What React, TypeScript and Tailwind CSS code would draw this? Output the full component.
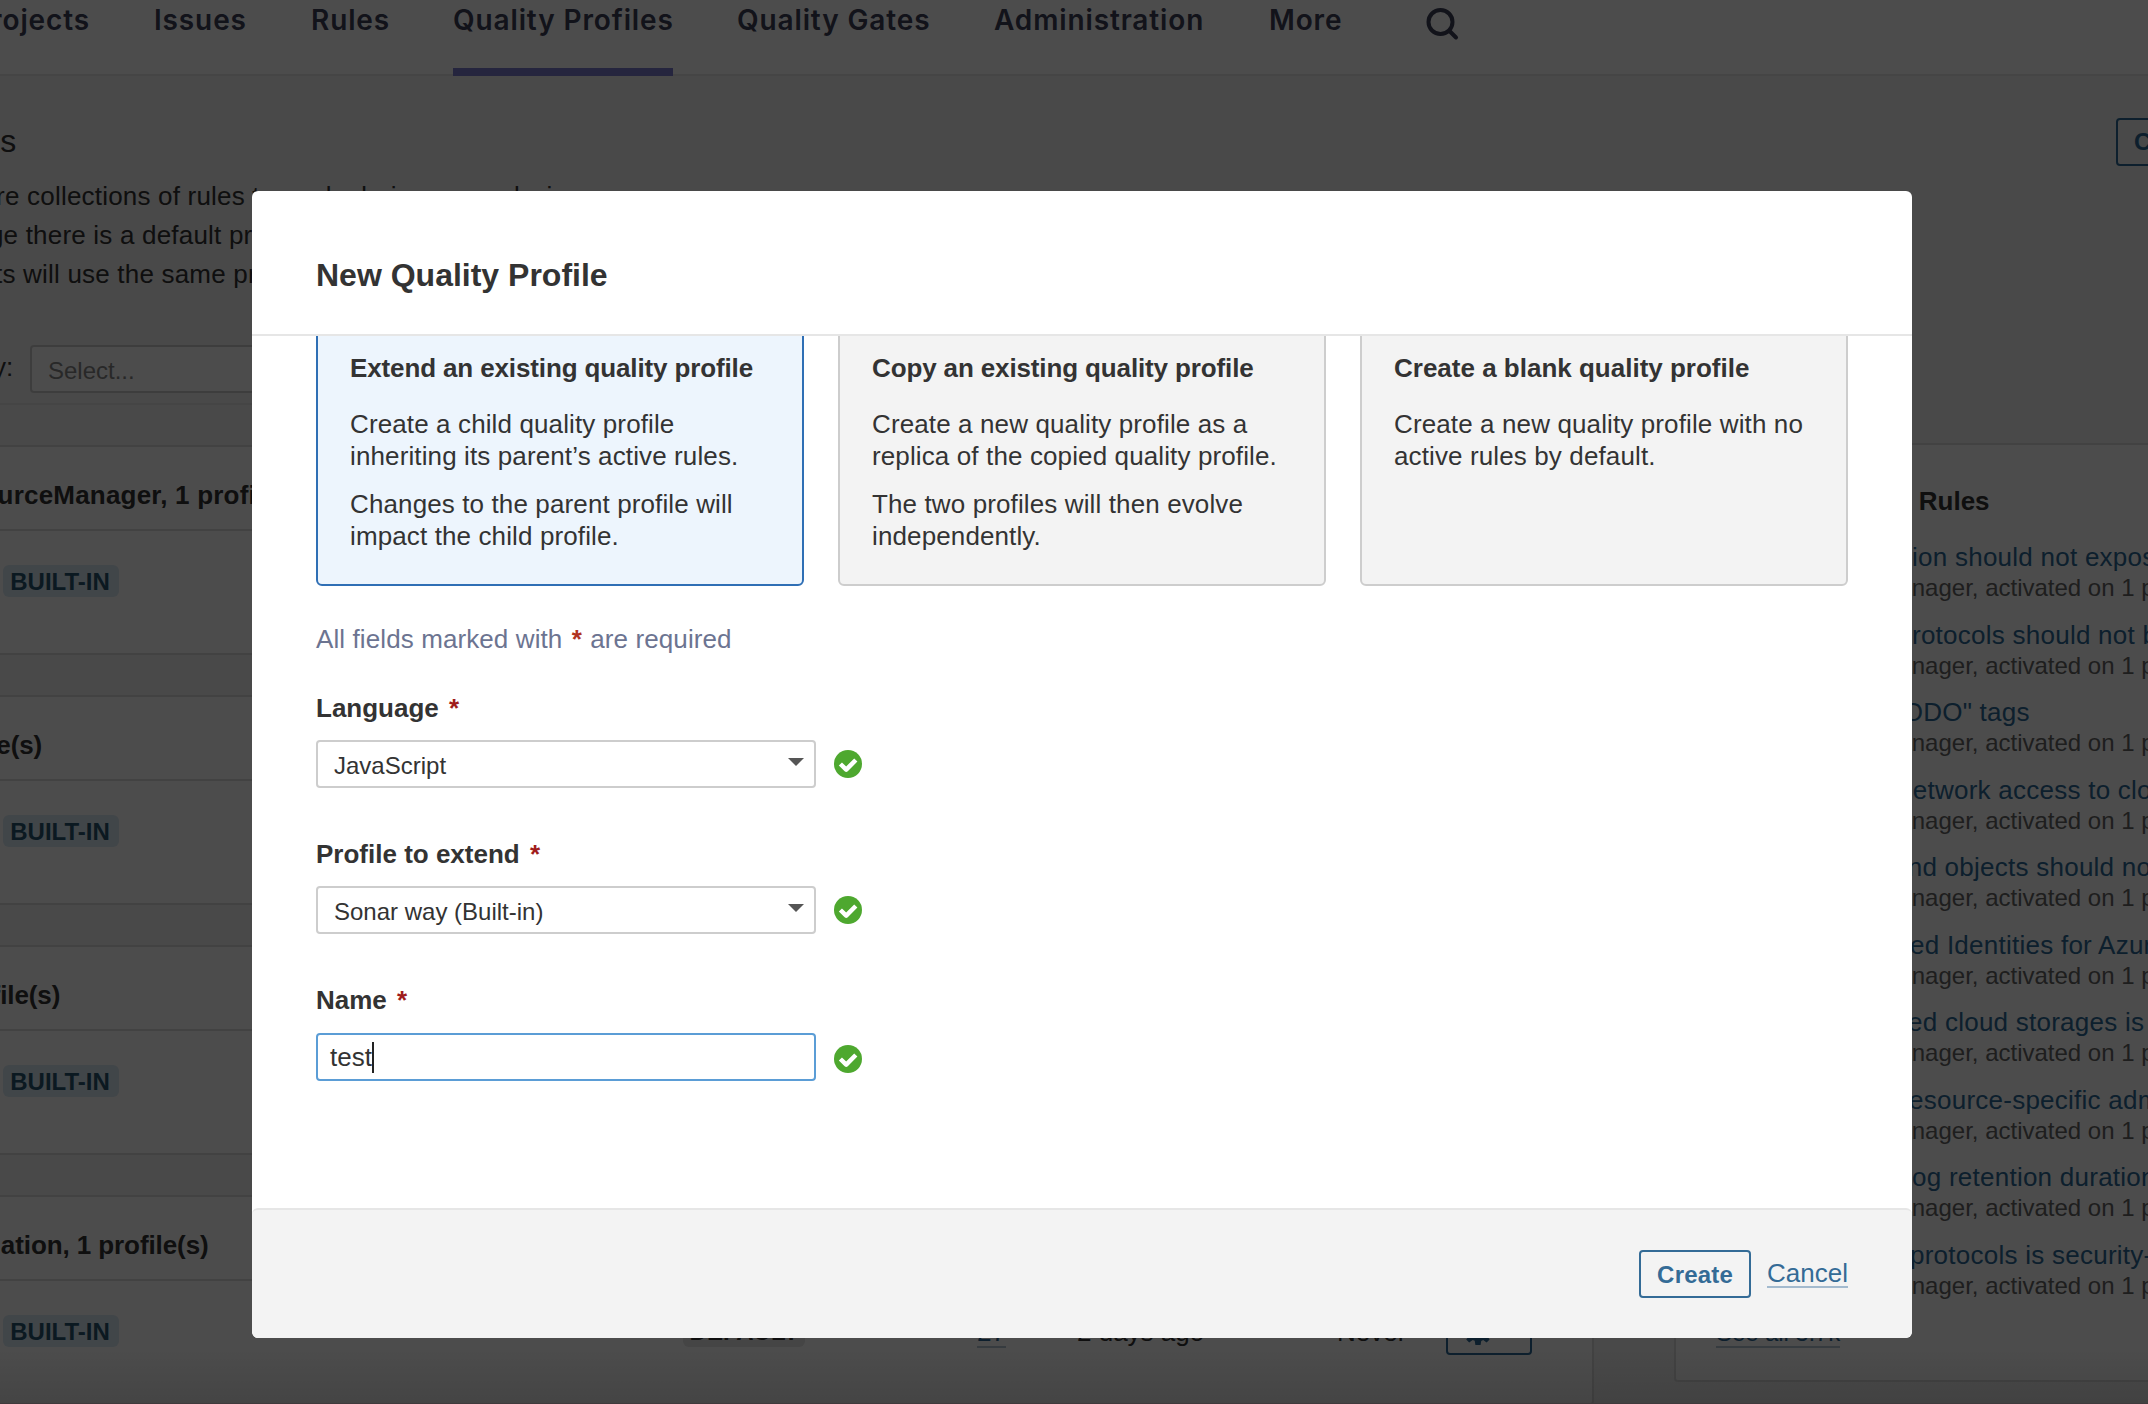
import React from "react";

const navItems = [
  { label: "Projects", box: "w-[90px] justify-end" },
  { label: "Issues", box: "w-[93px]" },
  { label: "Rules", box: "w-[78px]" },
  { label: "Quality Profiles", box: "w-[220px]", active: true },
  { label: "Quality Gates", box: "w-[193px]" },
  { label: "Administration", box: "w-[211px]" },
  { label: "More", box: "w-[74px]" },
];

const languages = [
  { name: "AzureResourceManager", text: "-ml-[140px] tracking-[0.2px]" },
  { name: "C#", text: "-ml-[137px] tracking-[-0.09px]" },
  { name: "CSS", text: "-ml-[139px] tracking-[-0.09px]" },
  { name: "CloudFormation", text: "-ml-[137px] tracking-[-0.09px]" },
];

const rules = [
  { text: "ion should not expose sensitive data", offset: "pl-[196px]" },
  { text: "rotocols should not be used", offset: "pl-[196px]" },
  { text: "TODO\" tags", offset: "pl-[171px]" },
  { text: "network access to cloud resources", offset: "pl-[182px]" },
  { text: "and objects should not be shared", offset: "pl-[177px]" },
  { text: "ed Identities for Azure resources", offset: "pl-[194px]" },
  { text: "ed cloud storages is sensitive", offset: "pl-[192px]" },
  { text: "esource-specific admin accounts", offset: "pl-[193px]" },
  { text: "og retention duration is short", offset: "pl-[196px]" },
  { text: "protocols is security-sensitive", offset: "pl-[194px]" },
];

function TopNav() {
  return (
    <header className="flex h-[76px] border-b-2 border-[#e6e6e6] bg-white font-['Inter',sans-serif] text-[28px] leading-8 font-semibold tracking-[0.87px] text-[#3d4059]">
      <nav className="flex gap-16">
        {navItems.map((item) => (
          <div
            key={item.label}
            className={`flex h-[76px] shrink-0 border-b-8 pt-1 whitespace-nowrap ${item.box} ${item.active ? "border-[#7e7ecf]" : "border-transparent"}`}
          >
            {item.label}
          </div>
        ))}
      </nav>
      <svg className="mt-[7px] ml-[82px] size-9" viewBox="0 0 36 36" fill="none" stroke="currentColor" strokeWidth="4" strokeLinecap="round">
        <circle cx="15.5" cy="15" r="12" />
        <path d="M24.5 24l6.5 6.5" />
      </svg>
    </header>
  );
}

function Badge({ children, className }: { children: React.ReactNode; className: string }) {
  return (
    <span className={`flex h-8 items-center justify-center rounded-md pt-px text-2xl leading-8 font-bold ${className}`}>
      {children}
    </span>
  );
}

function LanguagePanel({ name, text }: { name: string; text: string }) {
  return (
    <section className="h-[210px] rounded-br-sm border-y-2 border-r-2 border-[#dedede] bg-white">
      <div className="h-[84px] border-b-2 border-[#dedede] pt-8">
        <h2 className={`text-[26px] leading-8 font-bold whitespace-nowrap ${text}`}>{name}, 1 profile(s)</h2>
      </div>
      <div className="flex h-[122px] pt-[34px] text-[26px] leading-8">
        <Badge className="ml-[3px] w-[116px] bg-[#dbe9f4] pr-0.5 text-[#27546e]">BUILT-IN</Badge>
        <Badge className="ml-[564px] w-[122px] bg-[#e6e6e6]">DEFAULT</Badge>
        <span className="ml-[172px] h-[33px] w-[29px] border-b-2 border-[#b4c6d4] pt-px text-[#2c6a97]">27</span>
        <span className="ml-[71px] w-[130px] pt-px">2 days ago</span>
        <span className="ml-[130px] w-[70px] pt-px">Never</span>
        <span className="-mt-2 ml-[39px] flex h-12 w-[86px] items-center justify-center gap-2 rounded border-2 border-[#2c6a97] text-[#2c6a97]">
          <svg className="size-7" viewBox="0 0 28 28" fill="currentColor">
            <path
              fillRule="evenodd"
              d="M11.4 0h5.2l.7 4.2 2 .9L22.800 2.600l3 3-2.500 3.400.9 2.100L28 11.500v5l-4 .6-.9 2 2.500 3.500-3 3-3.400-2.500-2 .9-.6 4h-5.200l-.7-4.200-2-.8-3.500 2.500-3-3L4.900 19 4 17.100l-4-.6v-5l4-.6.9-2L2.400 5.500l3-3L8.800 5l2-.9zM14 9.500a4.500 4.500 0 100 9 4.500 4.500 0 000-9z"
            />
          </svg>
          <svg className="h-2 w-3.5" viewBox="0 0 14 8" fill="currentColor">
            <path d="M0 0h14L7 8z" />
          </svg>
        </span>
      </div>
    </section>
  );
}

function RecentRules() {
  return (
    <aside className="-mt-0.5 ml-20 h-[939px] w-[560px] shrink-0 rounded-sm border-2 border-[#dedede] bg-white pt-10 pl-10">
      <h2 className="text-[26px] leading-8 font-bold">Recently Added Rules</h2>
      <ul className="mt-6">
        {rules.map((rule) => (
          <li key={rule.text} className="h-[77.5px] whitespace-nowrap">
            <div className={`text-[26px] leading-8 tracking-[0.25px] text-[#2c6a97] ${rule.offset}`}>{rule.text}</div>
            <div className="-ml-[3px] text-2xl leading-[29px] text-[#666]">AzureResourceManager, activated on 1 profile(s)</div>
          </li>
        ))}
      </ul>
      <a className="-mt-px block h-[33px] w-fit border-b-2 border-[#b4c6d4] pt-0.5 text-2xl leading-8 tracking-[-0.1px] text-[#2c6a97]">See all 3.7k</a>
    </aside>
  );
}

function ProfilesPage() {
  return (
    <div className="h-[1404px] overflow-hidden bg-[#f3f3f3]">
      <TopNav />
      <div className="h-[329px] w-[1594px] border-b-2 border-[#e6e6e6]">
        <div className="flex w-[2260px] items-start justify-between pt-[42px]">
          <div className="w-[1200px] whitespace-nowrap">
            <h1 className="-ml-[199px] pt-[3px] text-[32px] leading-10">Quality Profiles</h1>
            <div className="mt-4 text-[26px] leading-[39px] tracking-[0.2px]">
              <p className="-ml-[204px]">Quality Profiles are collections of rules to apply during an analysis.</p>
              <p className="-ml-[202px]">For each language there is a default profile. All projects</p>
              <p className="-ml-[5px]">ts will use the same profile by default.</p>
            </div>
          </div>
          <button className="h-12 w-36 shrink-0 rounded border-2 border-[#2c6a97] pl-4 text-left text-2xl font-bold text-[#2c6a97]">
            Create
          </button>
        </div>
        <div className="mt-[51px] flex h-12 text-[26px]">
          <span className="-ml-[7px] w-[37px] pt-1.5 leading-8">y:</span>
          <div className="w-[400px] rounded border-2 border-[#cdcdcd] bg-white pt-0.5 pl-4 text-2xl leading-[44px] text-[#888]">Select...</div>
        </div>
      </div>
      <div className="mt-10 flex items-start">
        <main className="flex w-[1594px] shrink-0 flex-col gap-10">
          {languages.map((language) => (
            <LanguagePanel key={language.name} {...language} />
          ))}
        </main>
        <RecentRules />
      </div>
    </div>
  );
}

function CheckMark({ className = "" }: { className?: string }) {
  return (
    <svg className={`size-7 shrink-0 ${className}`} viewBox="0 0 28 28">
      <circle cx="14" cy="14" r="14" fill="#4ea82f" />
      <path d="M6.4 14l5.8 5.6 9.6-9.600" fill="none" stroke="#fff" strokeWidth="4.500" strokeLinejoin="round" />
    </svg>
  );
}

function FieldLabel({ children }: { children: React.ReactNode }) {
  return (
    <label className="block text-[26px] leading-8 font-bold">
      {children} <span className="ml-[3px] text-[#a01c1c]">*</span>
    </label>
  );
}

function SelectField({ label, value }: { label: string; value: string }) {
  return (
    <div className="h-[146px]">
      <FieldLabel>{label}</FieldLabel>
      <div className="mt-4 flex items-center">
        <div className="flex h-12 w-[500px] justify-between rounded border-2 border-[#cdcdcd] bg-white pr-2.5 pl-4">
          <span className="pt-0.5 text-2xl leading-[44px]">{value}</span>
          <svg className="mt-4 h-2 w-4" viewBox="0 0 16 8" fill="#555">
            <path d="M0 0h16L8 8z" />
          </svg>
        </div>
        <CheckMark className="ml-[18px]" />
      </div>
    </div>
  );
}

type OptionCardProps = { title: string; titleTracking: string; paragraphs: string[]; selected?: boolean };

function OptionCard({ title, titleTracking, paragraphs, selected }: OptionCardProps) {
  return (
    <div
      className={`h-[266px] w-[488px] rounded-md border-2 px-8 pt-[30px] ${selected ? "border-[#2f6fb5] bg-[#edf5fd]" : "border-[#cdcdcd] bg-[#f3f3f3]"}`}
    >
      <h3 className={`text-[26px] leading-8 font-bold whitespace-nowrap ${titleTracking}`}>{title}</h3>
      <div className="mt-6 flex flex-col gap-4 text-[26px] leading-8 tracking-[0.12px]">
        {paragraphs.map((text) => (
          <p key={text} className="whitespace-pre">{text}</p>
        ))}
      </div>
    </div>
  );
}

function NewProfileModal() {
  return (
    <div className="absolute top-[191px] left-[252px] flex h-[1147px] w-[1660px] flex-col overflow-hidden rounded-md bg-white">
      <div className="h-[145px] shrink-0 border-b-2 border-[#e6e6e6] pt-16 pl-16">
        <h2 className="text-[32px] leading-10 font-bold">New Quality Profile</h2>
      </div>
      <div className="h-[872px] overflow-hidden px-16">
        <div className="-mt-4 flex justify-between">
          <OptionCard
            selected
            title="Extend an existing quality profile"
            titleTracking="tracking-[-0.13px]"
            paragraphs={[
              "Create a child quality profile\ninheriting its parent’s active rules.",
              "Changes to the parent profile will\nimpact the child profile.",
            ]}
          />
          <OptionCard
            title="Copy an existing quality profile"
            titleTracking="tracking-[-0.13px]"
            paragraphs={[
              "Create a new quality profile as a\nreplica of the copied quality profile.",
              "The two profiles will then evolve\nindependently.",
            ]}
          />
          <OptionCard
            title="Create a blank quality profile"
            titleTracking="tracking-normal"
            paragraphs={["Create a new quality profile with no\nactive rules by default."]}
          />
        </div>
        <p className="mt-[37px] text-[26px] leading-8 tracking-[0.1px] text-[#6c7491]">
          All fields marked with <span className="mr-px ml-0.5 font-bold text-[#b0331f]">*</span> are required
        </p>
        <div className="mt-[37px]">
          <SelectField label="Language" value="JavaScript" />
          <SelectField label="Profile to extend" value="Sonar way (Built-in)" />
          <FieldLabel>Name</FieldLabel>
          <div className="mt-[17px] flex items-start">
            <div className="flex h-12 w-[500px] items-center rounded border-2 border-[#5b9dd6] bg-white pl-3 text-[26px] leading-[44px]">
              test
              <span className="h-[31px] w-0.5 bg-[#222]" />
            </div>
            <CheckMark className="mt-3 ml-[18px]" />
          </div>
        </div>
      </div>
      <div className="flex h-[130px] shrink-0 justify-end rounded-md border-t-2 border-[#e6e6e6] bg-[#f3f3f3] pt-10 pr-16">
        <button className="h-12 w-[112px] rounded border-2 border-[#346b96] pt-px text-2xl leading-[43px] font-bold tracking-[0.2px] text-[#346b96]">
          Create
        </button>
        <a className="mt-[7px] ml-4 h-[31px] border-b-2 border-[#a3bace] text-[26px] leading-8 text-[#346b96]">Cancel</a>
      </div>
    </div>
  );
}

export default function App() {
  return (
    <div className="relative h-[1404px] w-[2148px] overflow-hidden font-['Liberation_Sans',Arial,sans-serif] text-[#333]">
      <ProfilesPage />
      <div className="absolute inset-0 bg-black/70" />
      <div className="absolute inset-x-0 bottom-0 h-14 border-b border-[#403a3c] bg-linear-to-b from-transparent to-black/10" />
      <NewProfileModal />
    </div>
  );
}
